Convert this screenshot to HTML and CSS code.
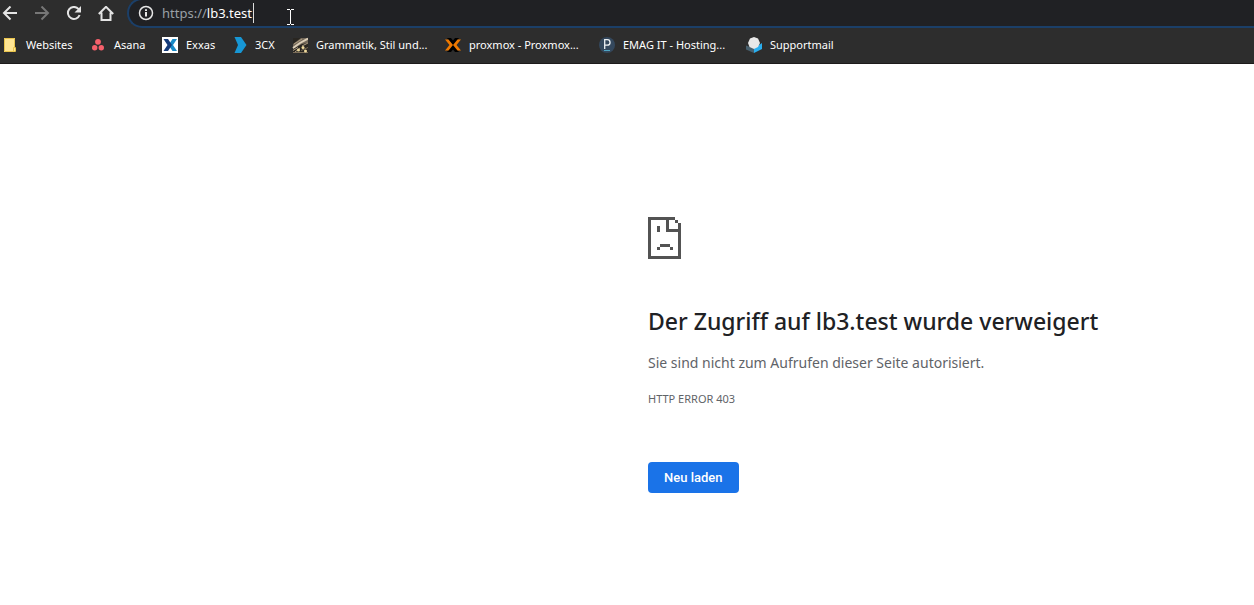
FILE: index.html
```html
<!DOCTYPE html>
<html lang="de">
<head>
<meta charset="utf-8">
<title>lb3.test</title>
<link rel="stylesheet" href="styles.css">
</head>
<body>
<header class="chrome">
  <div class="toolbar">
    <nav class="nav" aria-label="Navigation">
      <button class="nav-btn" type="button" aria-label="Zurück"><svg viewBox="0 0 16 16"><path d="M15 7H2.500M8.500 .5 2 7l6.500 6.500"/></svg></button>
      <button class="nav-btn nav-btn-off" type="button" aria-label="Vorwärts"><svg viewBox="0 0 16 16"><path d="M1 7h12.500M7.500 .5 14 7l-6.500 6.500"/></svg></button>
      <button class="nav-btn" type="button" aria-label="Neu laden"><svg viewBox="0 0 16 16"><path d="M13.600 9A6 6 0 1 1 12.400 2.900L14 4.500"/><path class="solid" d="M15 0v6.500H8.500z"/></svg></button>
      <button class="nav-btn" type="button" aria-label="Startseite"><svg viewBox="0 0 16 16"><path d="M.8 8 8 .8 15.200 8M3.500 6.500V14h9V6.500"/></svg></button>
    </nav>
    <div class="omnibox">
      <svg class="info" viewBox="0 0 16 16"><circle cx="8" cy="8" r="6.500"/><path d="M8 7v4.500M8 4.200v1.800"/></svg>
      <div class="address" role="textbox" aria-label="Adresse" tabindex="0"><span class="scheme">https://</span>lb3.test<span class="caret"></span></div>
      <svg class="pointer" viewBox="0 0 7 16"><path d="M0 .5h3M4 .5h3M3.500 1v14M0 15.500h3M4 15.500h3"/></svg>
    </div>
  </div>
  <nav class="bookmarks" aria-label="Lesezeichen">
    <a class="bookmark b-websites" href="#"><svg viewBox="0 0 16 16"><path fill="#ffe592" d="M2 1h11v14H2z"/><path fill="none" stroke="#e9c44c" d="M13 14.500H2.500V1.500h10V11M11.500 14.500v-4h2v4z"/></svg>Websites</a>
    <a class="bookmark b-asana" href="#"><svg viewBox="0 0 16 16"><g fill="#f6606b"><circle cx="8" cy="4.800" r="2.900"/><circle cx="4.700" cy="10.800" r="2.700"/><circle cx="11.300" cy="10.800" r="2.700"/></g></svg>Asana</a>
    <a class="bookmark b-exxas" href="#"><svg viewBox="0 0 16 16"><path fill="#fff" d="M0 0h16v16H0z"/><path fill="#178ac7" d="M10.500 2H15l-4 6 4 6h-4.500L7.500 9.500v-3z"/><path fill="#153b7a" d="M1.500 2H6l4 6-4 6H1.500l4-6z"/></svg>Exxas</a>
    <a class="bookmark b-3cx" href="#"><svg viewBox="0 0 16 16"><path fill="#1797d5" d="M3.500 0H10l5.500 8-5.500 8H3.500L7 8z"/></svg>3CX</a>
    <a class="bookmark b-grammatik" href="#"><svg viewBox="0 0 16 16"><path fill="#74695a" d="M1 1h15v15H1z"/><path fill="#292621" d="M1 1h8L1 7zM1 12l9-5 6-1v10H1z"/><path stroke="#ddcfb8" stroke-width="2" d="m1 11 7-5 8-4.500"/><path stroke="#ab9a80" stroke-width="1" d="m2 7 8-5M3 15l5-4M10 9l6-3M1 13.500l5-3"/><path stroke="#7b6d58" d="M1 15.500h15M9 13.500l7-3"/><g fill="#f0db9e"><circle cx="6.500" cy="13" r="1.500"/><circle cx="11" cy="10.500" r="1.500"/><circle cx="13.500" cy="14" r="1.500"/></g></svg>Grammatik, Stil und...</a>
    <a class="bookmark b-proxmox" href="#"><svg viewBox="0 0 16 16"><path fill="#000" d="M2 1h4l2 2.500L10 1h4L9.500 7v2l4.500 6h-4l-2-2.500L6 15H2l4.500-6V7z"/><path fill="#ef7900" d="M0 2.500h3.500L8 8l-4.500 5.500H0L4.500 8zM16 2.500h-3.500L8 8l4.500 5.500H16L11.500 8z"/></svg>proxmox - Proxmox...</a>
    <a class="bookmark b-emag" href="#"><svg viewBox="0 0 16 16"><circle cx="8" cy="8" r="8" fill="#34485d"/><path fill="none" stroke="#edf1f4" stroke-width="1.300" d="M5.700 12V2.700h2.600a2.600 2.600 0 0 1 0 5.500H5.700"/><path stroke="#4fa6c3" d="M5 13.500h6"/></svg>EMAG IT - Hosting...</a>
    <a class="bookmark b-mail" href="#"><svg viewBox="0 0 16 16"><path fill="#48606e" d="m0 8.500 8 3V16l-8-3.500z"/><path fill="#2aaeee" d="m8 11.500 8-5.500v6l-8 4z"/><path fill="#e8e8e8" d="M4 1.500 8 0l4 1.500L14 6l-2 4-4 2-4.500-2L2 6z"/></svg>Supportmail</a>
  </nav>
</header>
<main class="page">
  <section class="error">
    <svg class="sad-page" viewBox="0 0 33 42" aria-hidden="true"><path d="M0 0h27v3H3v36h27V6h3v36H0zM27 3h3v3h-3zM18 3h3v9h9v3H18zM9 9h3v6H9zM12 27h10v3H12zM9 30h3v3H9zM22 30h3v3h-3z"/></svg>
    <h1 class="title">Der Zugriff auf lb3.test wurde verweigert</h1>
    <p class="message">Sie sind nicht zum Aufrufen dieser Seite autorisiert.</p>
    <p class="code">HTTP ERROR 403</p>
    <button class="reload" type="button">Neu laden</button>
  </section>
</main>
</body>
</html>
```
FILE: styles.css
```css
* { box-sizing: border-box; }
body {
  margin: 0;
  background: #fff;
  font-family: "Noto Sans", "Open Sans", sans-serif;
  font-variant-ligatures: none;
}
.chrome {
  background: #2d2d2d;
  border-bottom: 1px solid #1d1b1b;
  overflow: hidden;
}
.toolbar { display: flex; height: 28px; }
.nav {
  display: flex;
  gap: 16px;
  align-items: center;
  padding: 0 13px 0 2px;
}
.nav-btn {
  display: flex;
  width: 16px;
  height: 16px;
  padding: 0;
  border: 0;
  background: none;
  color: #e4e4e4;
}
.nav-btn-off { color: #777; }
.nav-btn svg {
  width: 16px;
  height: 16px;
  fill: none;
  stroke: currentColor;
  stroke-width: 2;
}
.nav-btn .solid { fill: currentColor; stroke: none; }
.omnibox {
  flex: 1;
  display: flex;
  align-items: center;
  height: 30px;
  margin-top: -2px;
  padding-left: 9px;
  background: #202124;
  border: 2px solid #1b3f68;
  border-width: 2px 0 2px 2px;
  border-radius: 15px 0 0 15px;
}
.info {
  width: 16px;
  height: 16px;
  margin-right: 8px;
  fill: none;
  stroke: #e6e6e6;
  stroke-width: 2;
}
.info circle { stroke-width: 1.5; }
.address {
  display: flex;
  align-items: center;
  color: #fff;
  font-size: 13px;
  line-height: 20px;
  outline: 0;
}
.scheme { color: #9aa0a6; }
.caret { width: 1px; height: 20px; margin-left: 1px; background: #ddd; }
.pointer {
  width: 7px;
  height: 16px;
  margin: 8px 0 0 33px;
  stroke: #fff;
}
.bookmarks {
  display: flex;
  align-items: center;
  height: 35px;
  padding: 0 0 1px 2px;
}
.bookmark {
  flex: none;
  display: flex;
  align-items: center;
  gap: 8px;
  color: #fff;
  font-size: 11px;
  line-height: 16px;
  text-decoration: none;
  white-space: nowrap;
}
.bookmark svg { width: 16px; height: 16px; flex: none; }
.b-websites { width: 88px; }
.b-asana { width: 72px; }
.b-exxas { width: 69px; }
.b-3cx { width: 61px; }
.b-grammatik { width: 153px; }
.b-proxmox { width: 154px; }
.b-emag { width: 147px; }
.page { display: grid; grid-template-columns: 648fr 606fr; }
.error { grid-column: 2; padding-top: 153px; }
.sad-page { display: block; width: 33px; height: 42px; fill: #535353; }
.title {
  margin: 46px 0 0;
  color: #202124;
  font-size: 23px;
  font-weight: 500;
  line-height: 32px;
}
.message {
  margin: 16px 0 0;
  color: #5f6368;
  font-size: 14px;
  line-height: 20px;
}
.code {
  margin: 16px 0 0;
  color: #5f6368;
  font-size: 11px;
  line-height: 20px;
}
.reload {
  display: block;
  margin: 53px 0 0;
  height: 31px;
  padding: 0 16px;
  border: 0;
  border-radius: 4px;
  background: #1a73e8;
  color: #fff;
  font: 500 13px/16px Roboto, sans-serif;
}
```
